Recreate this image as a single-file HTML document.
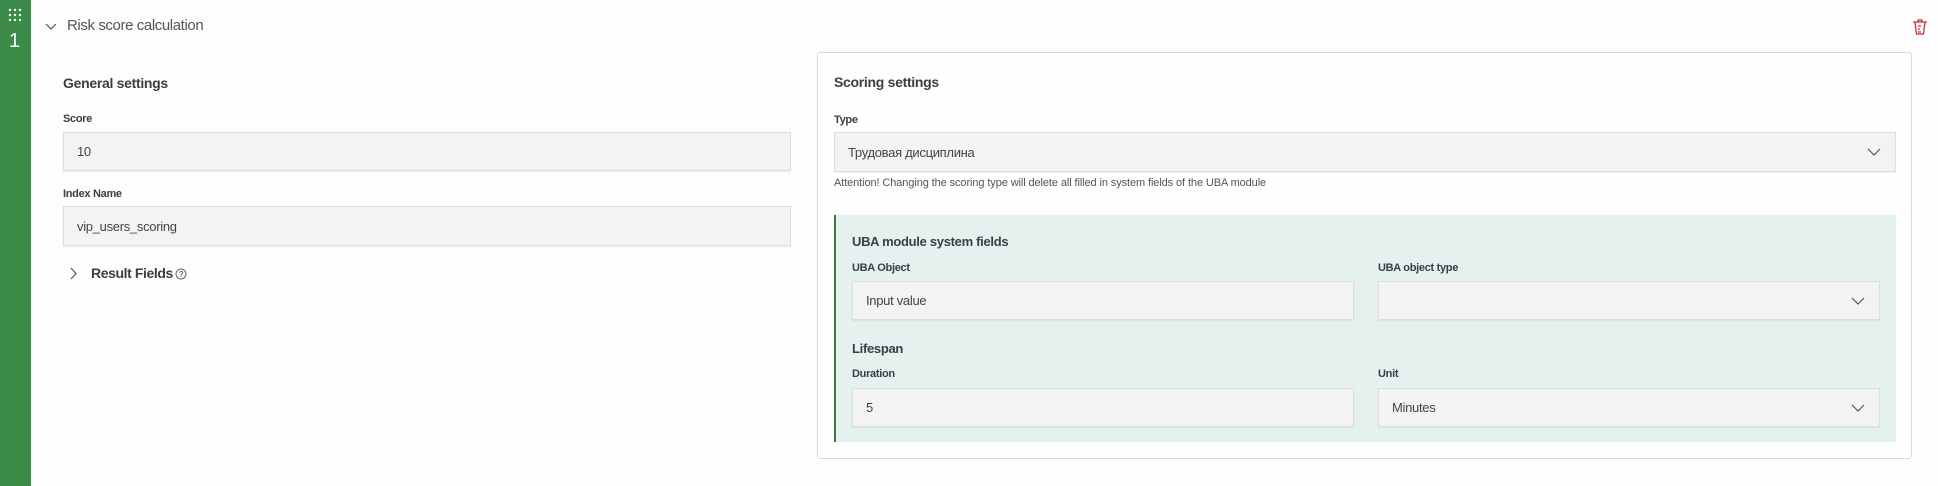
<!DOCTYPE html>
<html><head><meta charset="utf-8"><style>
*{box-sizing:border-box;margin:0;padding:0}
body{width:1938px;height:486px;background:#fdfdfd;font-family:"Liberation Sans",sans-serif;color:#3d3d45;position:relative;overflow:hidden}
.a{position:absolute}
.bar{left:0;top:0;width:31px;height:486px;background:#3b8a47}
.in{position:absolute;background:#f3f3f4;border:1px solid #dcdde0;box-shadow:0 1px 1px rgba(0,0,0,.06);font-size:13px;letter-spacing:-0.3px;padding-left:13px;display:flex;align-items:center;color:#444}
.lbl{position:absolute;font-size:11px;font-weight:bold;color:#3d3d45;letter-spacing:-0.3px}
.h{position:absolute;font-size:14px;font-weight:bold;color:#3d3d45;letter-spacing:-0.3px}
.chev{position:absolute;right:14px;top:50%;margin-top:-5px}
</style></head><body>
<div class="a bar"></div>
<svg class="a" style="left:8px;top:8px" width="14" height="14"><g fill="#fff"><circle cx="2" cy="2" r="1.2"/><circle cx="7" cy="2" r="1.2"/><circle cx="12" cy="2" r="1.2"/><circle cx="2" cy="7" r="1.2"/><circle cx="7" cy="7" r="1.2"/><circle cx="12" cy="7" r="1.2"/><circle cx="2" cy="12" r="1.2"/><circle cx="7" cy="12" r="1.2"/><circle cx="12" cy="12" r="1.2"/></g></svg>
<div class="a" style="left:9px;top:30px;color:#fff;font-size:20px">1</div>
<svg class="a" style="left:45px;top:23px" width="12" height="8"><path d="M1 1l5 5 5-5" stroke="#555" fill="none" stroke-width="1.2"/></svg>
<div class="a" style="left:67px;top:17px;font-size:15px;letter-spacing:-0.4px;color:#555">Risk score calculation</div>
<svg class="a" style="left:1911px;top:18px" width="18" height="18"><path d="M2 4h14M7 4V2h4v2M4 4l1.5 12h7L14 4M7 8h3M7 11h2M7 14h3" stroke="#d0312d" fill="none" stroke-width="1.3"/></svg>

<div class="h" style="left:63px;top:75px">General settings</div>
<div class="lbl" style="left:63px;top:113px">Score</div>
<div class="in" style="left:63px;top:132px;width:728px;height:39px">10</div>
<div class="lbl" style="left:63px;top:188px">Index Name</div>
<div class="in" style="left:63px;top:206px;width:728px;height:40px">vip_users_scoring</div>
<svg class="a" style="left:70px;top:267px" width="8" height="13"><path d="M1 1l5 5.5L1 12" stroke="#555" fill="none" stroke-width="1.2"/></svg>
<div class="a" style="left:91px;top:265px;font-size:14px;font-weight:bold;letter-spacing:-0.4px;display:flex;align-items:center">Result Fields<svg style="margin-left:2px;margin-top:2px" width="12" height="12"><circle cx="6" cy="6" r="5" stroke="#666" fill="none"/><text x="6" y="9" font-size="8" text-anchor="middle" fill="#666" font-family="Liberation Sans">?</text></svg></div>

<div class="a" style="left:817px;top:52px;width:1095px;height:407px;border:1px solid #d7d8dc;border-radius:3px;background:#fefefe"></div>
<div class="h" style="left:834px;top:74px">Scoring settings</div>
<div class="lbl" style="left:834px;top:114px">Type</div>
<div class="in" style="left:834px;top:132px;width:1062px;height:40px">Трудовая дисциплина<svg class="chev" width="14" height="10"><path d="M1 2l6 6 6-6" stroke="#555" fill="none" stroke-width="1.2"/></svg></div>
<div class="a" style="left:834px;top:177px;font-size:11px;color:#555;letter-spacing:-0.1px">Attention! Changing the scoring type will delete all filled in system fields of the UBA module</div>

<div class="a" style="left:834px;top:215px;width:1062px;height:227px;background:#e4f1ef;border-left:2px solid #3b7a45"></div>
<div class="h" style="left:852px;top:234px;font-size:13px">UBA module system fields</div>
<div class="lbl" style="left:852px;top:262px">UBA Object</div>
<div class="lbl" style="left:1378px;top:262px">UBA object type</div>
<div class="in" style="left:852px;top:281px;width:502px;height:39px">Input value</div>
<div class="in" style="left:1378px;top:281px;width:502px;height:39px"><svg class="chev" width="14" height="10"><path d="M1 2l6 6 6-6" stroke="#555" fill="none" stroke-width="1.2"/></svg></div>
<div class="h" style="left:852px;top:341px;font-size:13px">Lifespan</div>
<div class="lbl" style="left:852px;top:368px">Duration</div>
<div class="lbl" style="left:1378px;top:368px">Unit</div>
<div class="in" style="left:852px;top:388px;width:502px;height:39px">5</div>
<div class="in" style="left:1378px;top:388px;width:502px;height:39px">Minutes<svg class="chev" width="14" height="10"><path d="M1 2l6 6 6-6" stroke="#555" fill="none" stroke-width="1.2"/></svg></div>
</body></html>
